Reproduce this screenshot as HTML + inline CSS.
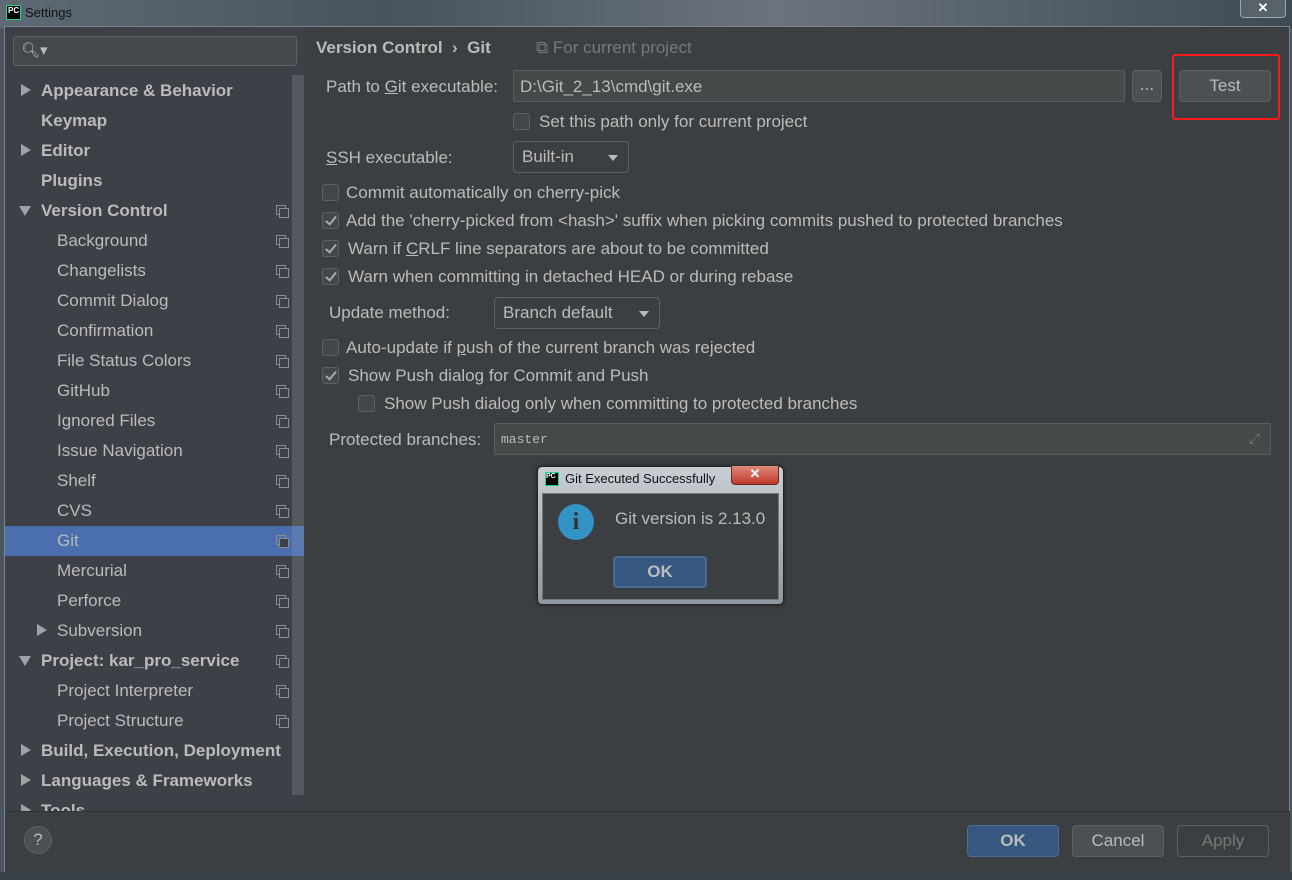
<!DOCTYPE html>
<html><head><meta charset="utf-8"><style>
*{margin:0;padding:0;box-sizing:border-box}
body{width:1292px;height:880px;overflow:hidden;background:#4a5560;font-family:"Liberation Sans","Noto Sans CJK SC",sans-serif;font-size:17px;color:#bbbbbb;position:relative}
.a{position:absolute;white-space:nowrap}
.tb{left:0;top:0;width:1292px;height:28px;background:linear-gradient(90deg,#5d6a75,#48535d 30%,#6b747c 60%,#3f4a55);}
.win{left:4px;top:26px;width:1286px;height:846px;background:#3c3f41;border:1px solid #7a8590}
.side{left:5px;top:27px;width:300px;height:784px;background:#3d4046}
.srch{left:13px;top:36px;width:284px;height:30px;border:1px solid #5e6166;border-radius:3px;background:#45484a}
.it{position:absolute;height:30px;line-height:32px;color:#bbbbbb;font-size:17px;white-space:nowrap}
.b{font-weight:bold}
.ic{position:absolute;width:10px;height:10px;border:1px solid #8a8d90;left:276px}
.ic:after{content:"";position:absolute;left:2px;top:2px;width:8px;height:8px;border:1px solid #8a8d90;background:#3d4046}
.tri{position:absolute;width:0;height:0;border-left:10px solid #a0a3a6;border-top:6px solid transparent;border-bottom:6px solid transparent}
.trd{position:absolute;width:0;height:0;border-top:10px solid #a0a3a6;border-left:6px solid transparent;border-right:6px solid transparent}
.cb{position:absolute;width:17px;height:17px;border:1px solid #5e6164;border-radius:3px;background:#43474a}
.cb.c:after{content:"";position:absolute;left:5px;top:1px;width:4px;height:9px;border-right:2px solid #aaa;border-bottom:2px solid #aaa;transform:rotate(40deg)}
.fld{position:absolute;border:1px solid #5a5d60;background:#45494a;border-radius:2px}
.btn{position:absolute;border:1px solid #5e6164;border-radius:4px;background:#4c5052;text-align:center;color:#bbbbbb}
.dd:after{content:"";position:absolute;right:10px;top:13px;border-top:6px solid #bbb;border-left:5px solid transparent;border-right:5px solid transparent}
</style></head><body>
<div class="a tb"></div>
<div class="a" style="left:6px;top:5px;width:15px;height:15px;background:#000;border:1px solid #21d789;color:#fff;font-size:8px;font-weight:bold;line-height:9px;padding-left:1px">PC</div>
<div class="a" style="left:25px;top:5px;font-size:13px;color:#111">Settings</div>
<div class="a" style="left:1240px;top:0;width:46px;height:18px;border:1px solid #9aa;border-top:none;border-radius:0 0 4px 4px;background:#58626b;color:#fff;text-align:center;font-size:13px;font-weight:bold">✕</div>
<div class="a win"></div>
<div class="a side"></div>
<div class="a srch"></div>
<div class="a" style="left:21px;top:41px;font-size:15px;color:#bbb">🔍︎▾</div>
<div class="a" style="left:292px;top:75px;width:12px;height:720px;background:#55585d"></div>
<div class="a" style="left:5px;top:526px;width:287px;height:30px;background:#4b6eaf"></div>
<div class="a" style="left:292px;top:526px;width:12px;height:30px;background:#5d7ab0"></div>

<div class="tri" style="left:21px;top:84px"></div><div class="it b" style="left:41px;top:75px">Appearance &amp; Behavior</div>
<div class="it b" style="left:41px;top:105px">Keymap</div>
<div class="tri" style="left:21px;top:144px"></div><div class="it b" style="left:41px;top:135px">Editor</div>
<div class="it b" style="left:41px;top:165px">Plugins</div>
<div class="trd" style="left:19px;top:206px"></div><div class="it b" style="left:41px;top:195px">Version Control</div><div class="ic" style="top:205px"></div>
<div class="it" style="left:57px;top:225px">Background</div><div class="ic" style="top:235px"></div>
<div class="it" style="left:57px;top:255px">Changelists</div><div class="ic" style="top:265px"></div>
<div class="it" style="left:57px;top:285px">Commit Dialog</div><div class="ic" style="top:295px"></div>
<div class="it" style="left:57px;top:315px">Confirmation</div><div class="ic" style="top:325px"></div>
<div class="it" style="left:57px;top:345px">File Status Colors</div><div class="ic" style="top:355px"></div>
<div class="it" style="left:57px;top:375px">GitHub</div><div class="ic" style="top:385px"></div>
<div class="it" style="left:57px;top:405px">Ignored Files</div><div class="ic" style="top:415px"></div>
<div class="it" style="left:57px;top:435px">Issue Navigation</div><div class="ic" style="top:445px"></div>
<div class="it" style="left:57px;top:465px">Shelf</div><div class="ic" style="top:475px"></div>
<div class="it" style="left:57px;top:495px">CVS</div><div class="ic" style="top:505px"></div>
<div class="it" style="left:57px;top:525px">Git</div><div class="ic" style="top:535px"></div>
<div class="it" style="left:57px;top:555px">Mercurial</div><div class="ic" style="top:565px"></div>
<div class="it" style="left:57px;top:585px">Perforce</div><div class="ic" style="top:595px"></div>
<div class="tri" style="left:37px;top:624px"></div><div class="it" style="left:57px;top:615px">Subversion</div><div class="ic" style="top:625px"></div>
<div class="trd" style="left:19px;top:656px"></div><div class="it b" style="left:41px;top:645px">Project: kar_pro_service</div><div class="ic" style="top:655px"></div>
<div class="it" style="left:57px;top:675px">Project Interpreter</div><div class="ic" style="top:685px"></div>
<div class="it" style="left:57px;top:705px">Project Structure</div><div class="ic" style="top:715px"></div>
<div class="tri" style="left:21px;top:744px"></div><div class="it b" style="left:41px;top:735px">Build, Execution, Deployment</div>
<div class="tri" style="left:21px;top:774px"></div><div class="it b" style="left:41px;top:765px">Languages &amp; Frameworks</div>
<div class="tri" style="left:21px;top:804px"></div><div class="it b" style="left:41px;top:795px">Tools</div>
<div class="a" style="left:5px;top:811px;width:1285px;height:61px;background:#3c3f41;border-top:1px solid #2f3133"></div>

<div class="a b" style="left:316px;top:38px;color:#bbb">Version Control &nbsp;›&nbsp; Git</div>
<div class="a" style="left:536px;top:38px;color:#787878">⧉ For current project</div>

<div class="a" style="left:326px;top:77px">Path to <u>G</u>it executable:</div>
<div class="fld" style="left:513px;top:70px;width:612px;height:32px"></div>
<div class="a" style="left:520px;top:77px">D:\Git_2_13\cmd\git.exe</div>
<div class="btn" style="left:1132px;top:70px;width:30px;height:32px;line-height:28px">...</div>
<div class="btn" style="left:1179px;top:70px;width:92px;height:32px;line-height:30px">Test</div>
<div class="a" style="left:1172px;top:54px;width:108px;height:66px;border:2px solid #ff1a1a;border-radius:3px"></div>
<div class="cb" style="left:513px;top:113px"></div><div class="a" style="left:539px;top:112px">Set this path only for current project</div>

<div class="a" style="left:326px;top:148px"><u>S</u>SH executable:</div>
<div class="btn dd" style="left:513px;top:141px;width:116px;height:32px;line-height:30px;text-align:left;padding-left:8px;background:#3c3f41">Built-in</div>

<div class="cb" style="left:322px;top:184px"></div><div class="a" style="left:346px;top:183px">Commit automatically on cherry-pick</div>
<div class="cb c" style="left:322px;top:212px"></div><div class="a" style="left:346px;top:211px">Add the 'cherry-picked from &lt;hash&gt;' suffix when picking commits pushed to protected branches</div>
<div class="cb c" style="left:322px;top:240px"></div><div class="a" style="left:348px;top:239px">Warn if <u>C</u>RLF line separators are about to be committed</div>
<div class="cb c" style="left:322px;top:268px"></div><div class="a" style="left:348px;top:267px">Warn when committing in detached HEAD or during rebase</div>

<div class="a" style="left:329px;top:303px">Update method:</div>
<div class="btn dd" style="left:494px;top:297px;width:166px;height:32px;line-height:30px;text-align:left;padding-left:8px;background:#3c3f41">Branch default</div>

<div class="cb" style="left:322px;top:339px"></div><div class="a" style="left:346px;top:338px">Auto-update if <u>p</u>ush of the current branch was rejected</div>
<div class="cb c" style="left:322px;top:367px"></div><div class="a" style="left:348px;top:366px">Show Push dialog for Commit and Push</div>
<div class="cb" style="left:358px;top:395px"></div><div class="a" style="left:384px;top:394px">Show Push dialog only when committing to protected branches</div>

<div class="a" style="left:329px;top:430px">Protected branches:</div>
<div class="fld" style="left:494px;top:423px;width:777px;height:32px"></div>
<div class="a" style="left:501px;top:432px;font-family:'Liberation Mono',monospace;font-size:13px">master</div>
<div class="a" style="left:1249px;top:430px;color:#777;font-size:14px">⤢</div>

<!-- dialog -->
<div class="a" style="left:537px;top:466px;width:247px;height:139px;border:1px solid #222;border-radius:5px;background:linear-gradient(#c8ced4,#8e98a2);box-shadow:0 0 4px rgba(0,0,0,.5)"></div>
<div class="a" style="left:545px;top:472px;width:14px;height:14px;background:#000;border:1px solid #21d789;color:#fff;font-size:7px;font-weight:bold;line-height:8px">PC</div>
<div class="a" style="left:565px;top:471px;font-size:13px;color:#111">Git Executed Successfully</div>
<div class="a" style="left:731px;top:466px;width:48px;height:19px;background:linear-gradient(#e08a7a,#c0392b);border:1px solid #6a2a20;border-top:none;border-radius:0 0 4px 4px;color:#fff;text-align:center;font-size:13px;font-weight:bold;line-height:16px">✕</div>
<div class="a" style="left:542px;top:493px;width:237px;height:107px;background:#3c3f41;border:1px solid #777"></div>
<div class="a" style="left:558px;top:504px;width:36px;height:36px;border-radius:50%;background:#3592c4;color:#333;font-weight:bold;font-size:24px;text-align:center;line-height:36px;font-family:'Liberation Serif',serif">i</div>
<div class="a" style="left:615px;top:509px">Git version is 2.13.0</div>
<div class="a b" style="left:613px;top:556px;width:94px;height:32px;background:#365880;border:2px solid #4a6d95;border-radius:4px;text-align:center;line-height:28px">OK</div>

<!-- bottom -->
<div class="a" style="left:24px;top:826px;width:28px;height:28px;border-radius:50%;background:#4c5052;border:1px solid #5e6164;text-align:center;line-height:26px;font-size:17px">?</div>
<div class="a b" style="left:967px;top:825px;width:92px;height:32px;background:#365880;border:1px solid #4a6d95;border-radius:4px;text-align:center;line-height:30px">OK</div>
<div class="btn" style="left:1072px;top:825px;width:92px;height:32px;line-height:30px">Cancel</div>
<div class="btn" style="left:1177px;top:825px;width:92px;height:32px;line-height:30px;background:#3c3f41;color:#777">Apply</div>
<div class="a" style="left:0;top:872px;width:1292px;height:8px;background:#3a4148"></div>
</body></html>
